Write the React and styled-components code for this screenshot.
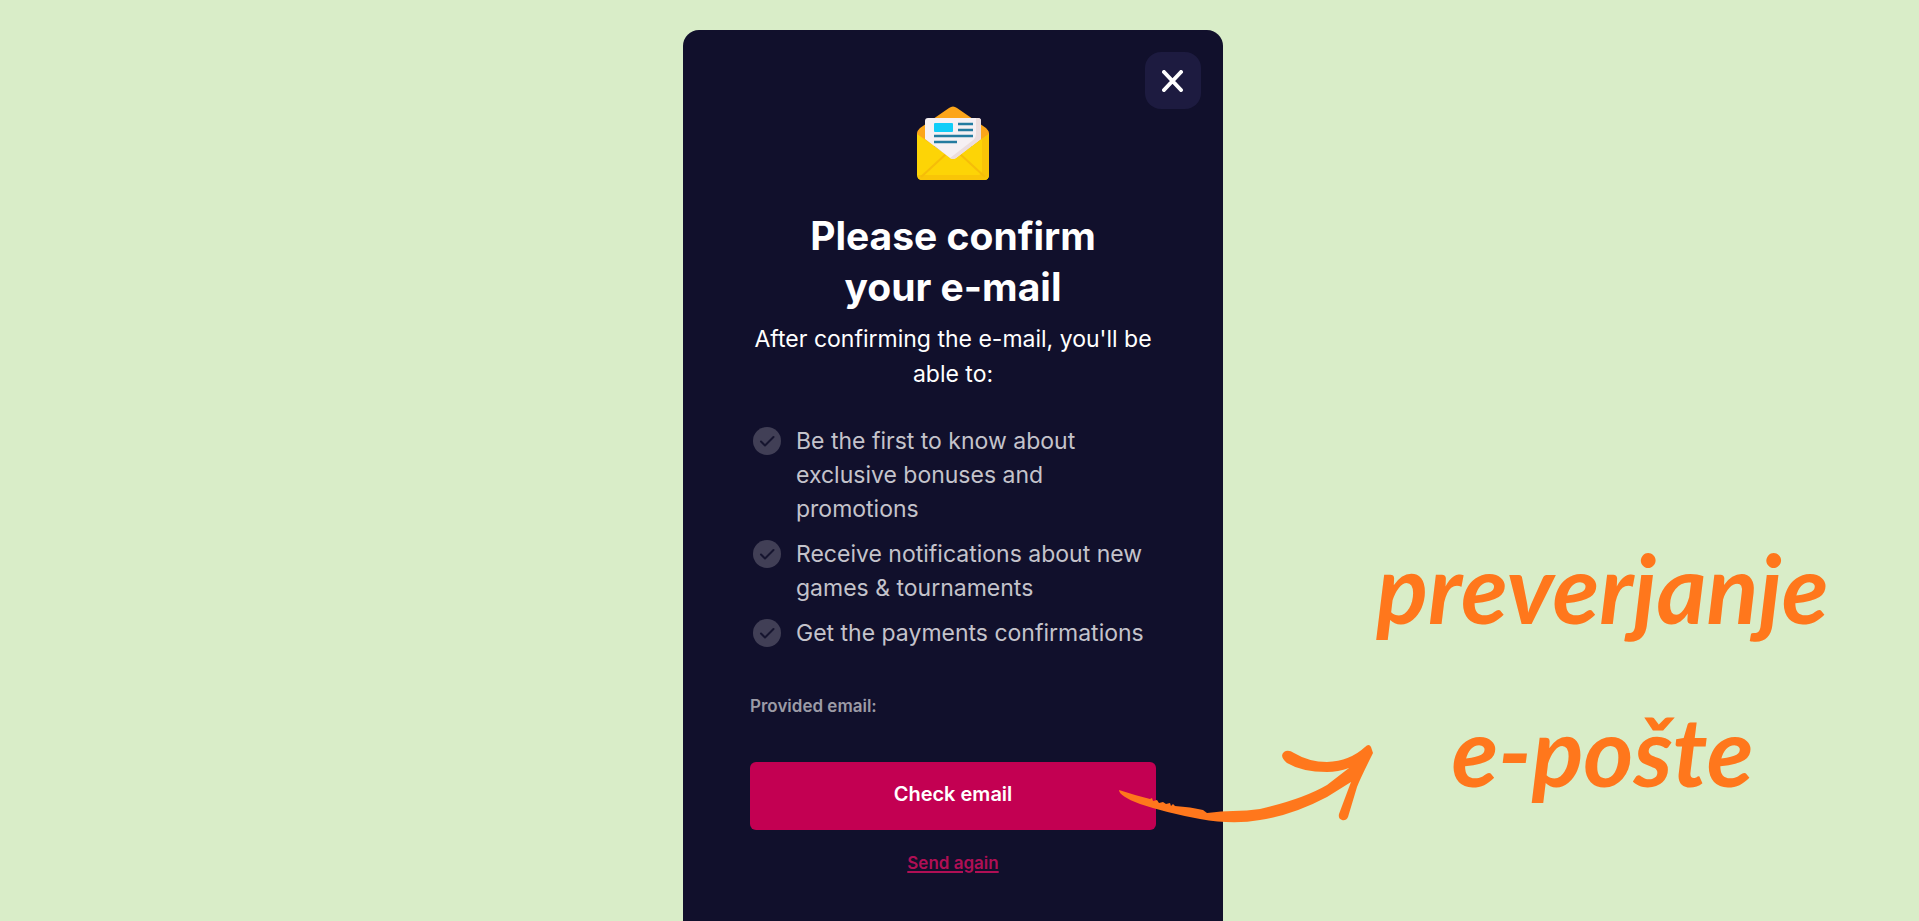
import styled, { createGlobalStyle } from 'styled-components'

const GlobalStyle = createGlobalStyle`
  * {
    box-sizing: border-box;
  }

  body {
    margin: 0;
    background: #d9edc8;
    font-family: Inter, sans-serif;
  }
`

const Page = styled.div`
  display: grid;
  grid-template-columns: minmax(0, 1fr) 540px minmax(0, 1fr);
  min-height: 100vh;
  padding: 30px 13px 0 0;
`

const Modal = styled.main`
  position: relative;
  grid-column: 2;
  display: flex;
  flex-direction: column;
  padding: 76px 67px 32px;
  border-radius: 16px 16px 0 0;
  background: #11102c;
  color: #fff;
`

const CloseButton = styled.button`
  position: absolute;
  top: 22px;
  right: 22px;
  display: grid;
  place-items: center;
  width: 56px;
  height: 57px;
  padding: 0;
  border: none;
  border-radius: 16px;
  background: #1d1b40;
  color: #fff;
  cursor: pointer;
`

const MailIcon = styled.svg`
  align-self: center;
  width: 72px;
  height: 74px;
`

const Title = styled.h1`
  margin: 30px 40px 0;
  font-size: 39px;
  font-weight: 700;
  line-height: 51px;
  text-align: center;
`

const Subtitle = styled.p`
  margin: 10px 0 0;
  font-size: 23px;
  line-height: 35px;
  text-align: center;
`

const BenefitList = styled.ul`
  display: flex;
  flex-direction: column;
  gap: 11px;
  margin: 32px 0 0;
  padding: 0 8px 0 3px;
  list-style: none;
`

const Benefit = styled.li`
  display: flex;
  gap: 15px;
  color: #c4c3cb;
  font-size: 23px;
  line-height: 34px;
`

const CheckIcon = styled.svg`
  flex: none;
  width: 28px;
  height: 28px;
  margin-top: 3px;
`

const EmailLabel = styled.p`
  margin: 44px 0;
  color: #9c9ba6;
  font-size: 17px;
  font-weight: 600;
  line-height: 24px;
`

const PrimaryButton = styled.button`
  height: 68px;
  padding: 0 0 4px;
  border: none;
  border-radius: 6px;
  background: #c30052;
  color: #fff;
  font-family: inherit;
  font-size: 20px;
  font-weight: 600;
  cursor: pointer;
`

const ResendLink = styled.a`
  align-self: center;
  margin-top: 21px;
  color: #b00f55;
  font-size: 17px;
  font-weight: 600;
  line-height: 24px;
  text-decoration-thickness: 2px;
  text-underline-offset: 2px;
`

const Arrow = styled.svg`
  position: absolute;
  top: 714px;
  left: 436px;
  width: 255px;
  height: 80px;
  pointer-events: none;
`

const Note = styled.aside`
  margin: 475px 0 0 76px;
  color: #ff771c;
  font-family: Lato, sans-serif;
  font-size: 96px;
  font-style: italic;
  font-weight: 700;
  line-height: 163px;
  text-align: center;
`

const benefits = [
  'Be the first to know about exclusive bonuses and promotions',
  'Receive notifications about new games & tournaments',
  'Get the payments confirmations',
]

function App() {
  return (
    <>
      <GlobalStyle />
      <Page>
        <Modal>
          <CloseButton aria-label="Close">
            <svg width="22" height="22" viewBox="0 0 22 22" fill="none" stroke="currentColor" strokeWidth="4" strokeLinecap="round">
              <path d="M2 2l17 18M19 2L2 20" />
            </svg>
          </CloseButton>

          <MailIcon viewBox="0 0 72 74" aria-hidden="true">
            <path d="M0 27Q0 25 3 22L32 2Q36-1 40 2L69 22Q72 25 72 27V40H0z" fill="#fca519" />
            <path d="M0 28L36 53L72 28V69Q72 74 67 74H5Q0 74 0 69z" fill="#fdd406" />
            <path d="M65 33L72 28V69Q72 74 67 74H5Q1 74 1 69H61Q65 69 65 65z" fill="#f9c507" />
            <path d="M4 71L29 48M68 71L43 48" stroke="#f6bd09" strokeWidth="2" />
            <path d="M8 15Q8 12 11 12H61Q64 12 64 15V33L39 52Q36 54 33 52L8 33z" fill="#f6f0f3" />
            <path d="M59 12H61Q64 12 64 15V33L39 52Q36 54 33 52L55 35Q59 32 59 28z" fill="#ecdddd" />
            <rect x="17" y="17" width="19" height="9" rx="1" fill="#12cdf8" />
            <path d="M41 18H56M41 24H56M17 30H56M17 36H40" stroke="#247ba0" strokeWidth="2.4" />
          </MailIcon>

          <Title>Please confirm your e-mail</Title>
          <Subtitle>After confirming the e-mail, you'll be able to:</Subtitle>

          <BenefitList>
            {benefits.map((text) => (
              <Benefit key={text}>
                <CheckIcon viewBox="0 0 28 28" fill="none" aria-hidden="true">
                  <circle cx="14" cy="14" r="14" fill="#413f56" />
                  <path d="M8 14.5l4 4L20.5 10" stroke="#16152f" strokeWidth="2" strokeLinecap="round" strokeLinejoin="round" />
                </CheckIcon>
                <span>{text}</span>
              </Benefit>
            ))}
          </BenefitList>

          <EmailLabel>Provided email:</EmailLabel>
          <PrimaryButton>Check email</PrimaryButton>
          <ResendLink href="#">Send again</ResendLink>

          <Arrow viewBox="0 0 255 80" fill="#ff771c" aria-hidden="true">
            <path d="M0 46Q15 51 31 55L33 54L34 57L38 56L40 59L44 58L47 60L51 59L52 62L54 60L56 62Q72 63 84 66L88 69Q103 67 114 67Q128 67 141 65Q184 55 208 41L230 24Q219 28 208 28Q183 28 168 19Q160 12 165 8Q169 5 175 9Q190 18 208 18Q231 17 246 3Q250-1 252 3L254 9Q241 35 238 43L229 73Q227 77 223 76Q219 75 220 70L232 38L208 53Q174 71 141 76Q114 81 81 75Q48 69 21 60Q0 52 0 46z" />
          </Arrow>
        </Modal>

        <Note>
          preverjanje
          <br />
          e-pošte
        </Note>
      </Page>
    </>
  )
}

export default App
